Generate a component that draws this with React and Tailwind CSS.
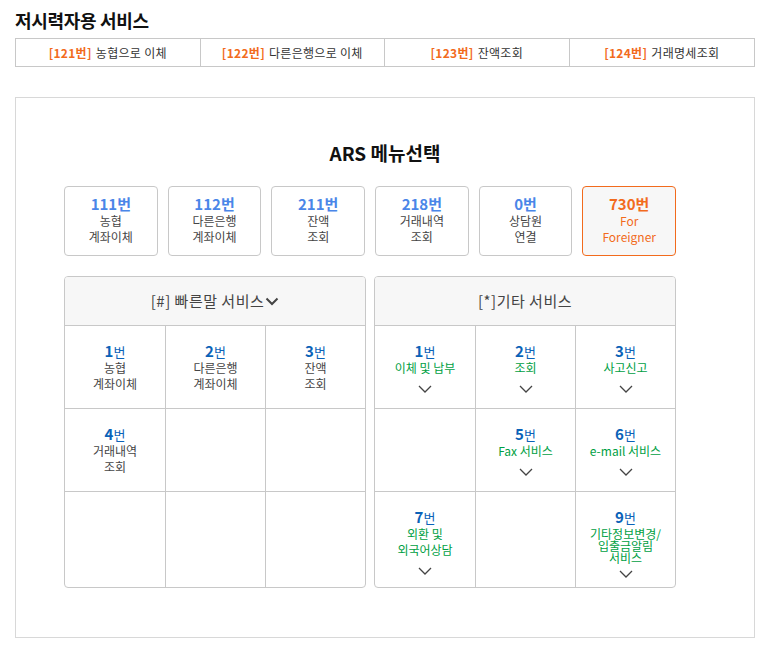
import React from "react";

const KR = { fontFamily: '"Noto Sans CJK KR", "Noto Sans", sans-serif' };

function Chevron({ className = "" }) {
  return (
    <svg width="14" height="8" viewBox="0 0 14 8" className={className}>
      <path d="M1 1 L7 7 L13 1" fill="none" stroke="#444" strokeWidth="1.3" />
    </svg>
  );
}

const topNav = [
  ["121번", "농협으로 이체"],
  ["122번", "다른은행으로 이체"],
  ["123번", "잔액조회"],
  ["124번", "거래명세조회"],
];

const ars = [
  ["111번", ["농협", "계좌이체"]],
  ["112번", ["다른은행", "계좌이체"]],
  ["211번", ["잔액", "조회"]],
  ["218번", ["거래내역", "조회"]],
  ["0번", ["상담원", "연결"]],
];

function Num({ n }) {
  return (
    <div className="leading-[17px] text-[#0a62b8]">
      <span className="text-[15px] font-bold">{n}</span>
      <span className="text-[13px]">번</span>
    </div>
  );
}

function LeftCell({ n, lines }) {
  return (
    <div className="h-full flex flex-col items-center pt-[16px] text-center">
      {n && <Num n={n} />}
      {lines && lines.map((l) => (
        <div key={l} className="text-[12px] leading-[16px] text-[#444]">{l}</div>
      ))}
    </div>
  );
}

function RightCell({ n, lines, tight }) {
  if (!n) return <div className="h-full" />;
  return (
    <div className="h-full flex flex-col items-center pt-[16px] text-center">
      <Num n={n} />
      <div className={tight ? "mt-[2px]" : ""}>
        {lines.map((l) => (
          <div key={l} className={`text-[12px] ${tight ? "leading-[12px]" : "leading-[16px]"} text-[#00a043]`}>{l}</div>
        ))}
      </div>
      <Chevron className={tight ? "mt-[6px]" : "mt-[9px]"} />
    </div>
  );
}

export default function App() {
  return (
    <div className="w-[759px] h-[647px] bg-white pl-[15px] pr-[4px] pt-[8px]" style={KR}>
      <h1 className="text-[18px] font-bold leading-[24px] text-[#111] tracking-[-0.3px]">저시력자용 서비스</h1>
      <div className="mt-[6px] grid grid-cols-4 border border-[#c8c8c8] h-[29px]">
        {topNav.map(([n, t], i) => (
          <div key={n} className={`flex items-center justify-center text-[12px] text-[#333] tracking-[0.3px] ${i < 3 ? "border-r border-[#c8c8c8]" : ""}`}>
            <span className="font-bold text-[#f26b1d] mr-[4px] text-[12px]">[{n}]</span>
            <span>{t}</span>
          </div>
        ))}
      </div>

      <div className="mt-[30px] border border-[#d8d8d8] h-[541px] pt-[42px]">
        <div className="text-center text-[19px] font-bold leading-[26px] text-[#111]">ARS 메뉴선택</div>
        <div className="ml-[48px] w-[612px]">
          <div className="mt-[20px] flex gap-[10px]">
            {ars.map(([n, lines]) => (
              <div key={n} className="w-[94px] h-[70px] border border-[#c8c8c8] rounded-[4px] flex flex-col items-center pt-[8px] text-center">
                <div className="text-[15px] font-bold leading-[18px] text-[#4a86e8]">{n}</div>
                {lines.map((l) => (
                  <div key={l} className="text-[12px] leading-[16px] text-[#444]">{l}</div>
                ))}
              </div>
            ))}
            <div className="w-[94px] h-[70px] border border-[#f26b1d] bg-[#f7f7f7] rounded-[4px] flex flex-col items-center pt-[8px] text-center">
              <div className="text-[15px] font-bold leading-[18px] text-[#f26b1d]">730번</div>
              <div className="text-[12px] leading-[16px] text-[#f26b1d]">For</div>
              <div className="text-[12px] leading-[16px] text-[#f26b1d]">Foreigner</div>
            </div>
          </div>

          <div className="mt-[20px] flex gap-[8px]">
            {/* left panel */}
            <div className="w-[302px] border border-[#c8c8c8] rounded-[4px] overflow-hidden">
              <div className="h-[49px] bg-[#f7f7f7] border-b border-[#c8c8c8] flex items-center justify-center text-[15px] text-[#444]">
                <span className="tracking-[0.5px]">[#] 빠른말 서비스</span>
                <svg width="14" height="9" viewBox="0 0 14 9" className="ml-[1px]">
                  <path d="M1.5 1.5 L7 7 L12.5 1.5" fill="none" stroke="#444" strokeWidth="2" />
                </svg>
              </div>
              <div className="grid grid-cols-[101px_100px_1fr] grid-rows-[83px_83px_95px]">
                <div className="border-r border-b border-[#c8c8c8]"><LeftCell n="1" lines={["농협", "계좌이체"]} /></div>
                <div className="border-r border-b border-[#c8c8c8]"><LeftCell n="2" lines={["다른은행", "계좌이체"]} /></div>
                <div className="border-b border-[#c8c8c8]"><LeftCell n="3" lines={["잔액", "조회"]} /></div>
                <div className="border-r border-b border-[#c8c8c8]"><LeftCell n="4" lines={["거래내역", "조회"]} /></div>
                <div className="border-r border-b border-[#c8c8c8]" />
                <div className="border-b border-[#c8c8c8]" />
                <div className="border-r border-[#c8c8c8]" />
                <div className="border-r border-[#c8c8c8]" />
                <div />
              </div>
            </div>

            {/* right panel */}
            <div className="w-[302px] border border-[#c8c8c8] rounded-[4px] overflow-hidden">
              <div className="h-[49px] bg-[#f7f7f7] border-b border-[#c8c8c8] flex items-center justify-center text-[15px] text-[#444]">
                <span className="tracking-[0.5px]">[*]기타 서비스</span>
              </div>
              <div className="grid grid-cols-[101px_100px_1fr] grid-rows-[83px_83px_95px]">
                <div className="border-r border-b border-[#c8c8c8]"><RightCell n="1" lines={["이체 및 납부"]} /></div>
                <div className="border-r border-b border-[#c8c8c8]"><RightCell n="2" lines={["조회"]} /></div>
                <div className="border-b border-[#c8c8c8]"><RightCell n="3" lines={["사고신고"]} /></div>
                <div className="border-r border-b border-[#c8c8c8]" />
                <div className="border-r border-b border-[#c8c8c8]"><RightCell n="5" lines={["Fax 서비스"]} /></div>
                <div className="border-b border-[#c8c8c8]"><RightCell n="6" lines={["e-mail 서비스"]} /></div>
                <div className="border-r border-[#c8c8c8]"><RightCell n="7" lines={["외환 및", "외국어상담"]} /></div>
                <div className="border-r border-[#c8c8c8]" />
                <div><RightCell n="9" lines={["기타정보변경/", "입출금알림", "서비스"]} tight /></div>
              </div>
            </div>
          </div>
        </div>
      </div>
    </div>
  );
}
